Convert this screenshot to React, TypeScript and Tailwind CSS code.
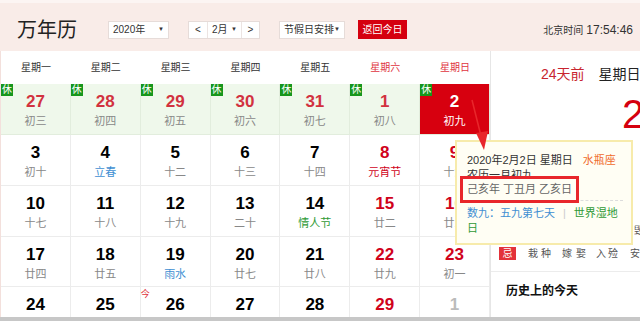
import React from "react";

type Cell = {
  d: string;
  l?: string;
  dc?: string;
  lc?: string;
  rest?: boolean;
  sel?: boolean;
  today?: boolean;
};

const weekdays = ["星期一", "星期二", "星期三", "星期四", "星期五", "星期六", "星期日"];

const RED = "text-[#d0021b]";
const HRED = "text-[#d2323f]";
const BLUE = "text-[#3f8fd2]";
const GREEN = "text-[#2f9a36]";

const rows: Cell[][] = [
  [
    { d: "27", l: "初三", dc: HRED, rest: true },
    { d: "28", l: "初四", dc: HRED, rest: true },
    { d: "29", l: "初五", dc: HRED, rest: true },
    { d: "30", l: "初六", dc: HRED, rest: true },
    { d: "31", l: "初七", dc: HRED, rest: true },
    { d: "1", l: "初八", dc: HRED, rest: true },
    { d: "2", l: "初九", rest: true, sel: true },
  ],
  [
    { d: "3", l: "初十" },
    { d: "4", l: "立春", lc: BLUE },
    { d: "5", l: "十二" },
    { d: "6", l: "十三" },
    { d: "7", l: "十四" },
    { d: "8", l: "元宵节", dc: RED, lc: RED },
    { d: "9", l: "十六", dc: RED },
  ],
  [
    { d: "10", l: "十七" },
    { d: "11", l: "十八" },
    { d: "12", l: "十九" },
    { d: "13", l: "二十" },
    { d: "14", l: "情人节", lc: GREEN },
    { d: "15", l: "廿二", dc: RED },
    { d: "16", l: "廿三", dc: RED },
  ],
  [
    { d: "17", l: "廿四" },
    { d: "18", l: "廿五" },
    { d: "19", l: "雨水", lc: BLUE },
    { d: "20", l: "廿七" },
    { d: "21", l: "廿八" },
    { d: "22", l: "廿九", dc: RED },
    { d: "23", l: "初一", dc: RED },
  ],
  // last row is cut by the window, lunar text not visible
  [
    { d: "24" },
    { d: "25" },
    { d: "26", today: true },
    { d: "27" },
    { d: "28" },
    { d: "29", dc: RED },
    { d: "1", dc: "text-[#bbbbbb]" },
  ],
];

const rowHeights = ["h-[51px]", "h-[51px]", "h-[51px]", "h-[50px]", "h-[50px]"];

function DayCell({ c, holiday }: { c: Cell; holiday: boolean }) {
  const bg = c.sel ? "bg-[#d7000f]" : holiday ? "bg-[#eff8eb]" : "bg-white";
  const border = holiday ? "border-[#e2eddd]" : "border-[#ececec]";
  return (
    <div className={`relative flex flex-col items-center pt-[8px] border-r border-b ${border} ${bg}`}>
      {c.rest && (
        <span className="absolute left-0 top-0 w-[12px] h-[12px] bg-[#17961c] text-white text-[10px] leading-[12px] text-center">
          休
        </span>
      )}
      {c.today && (
        <span className="absolute left-0 top-[2px] text-[9px] leading-[10px] text-[#e0313a]">今</span>
      )}
      <span
        className={`text-[17px] leading-[20px] font-bold ${c.sel ? "text-white" : c.dc ?? "text-black"}`}
      >
        {c.d}
      </span>
      {c.l && (
        <span className={`text-[11px] leading-[18px] ${c.sel ? "text-white" : c.lc ?? "text-[#888888]"}`}>
          {c.l}
        </span>
      )}
    </div>
  );
}

function Select({ label, w }: { label: string; w: string }) {
  return (
    <div className={`${w} h-[18px] bg-white border border-[#e6dcd9] flex items-center justify-between px-[4px] text-[10px] text-[#333] whitespace-nowrap`}>
      <span>{label}</span>
      <span className="text-[6px]">▼</span>
    </div>
  );
}

export default function App() {
  return (
    <div className="relative w-[640px] h-[321px] overflow-hidden bg-white font-['Liberation_Sans','Noto_Sans_CJK_SC',sans-serif] border-t-[3px] border-[#fcf5f3]">
      {/* header */}
      <div className="h-[48px] bg-[#f9ece8] flex items-center pl-[17px] pr-[7px] pt-[5px]">
        <h1 className="text-[20px] leading-[24px] text-[#222] w-[91px]">万年历</h1>
        <Select label="2020年" w="w-[61px]" />
        <div className="ml-[19px] w-[72px] h-[18px] bg-white border border-[#e6dcd9] flex items-center text-[10px] text-[#333]">
          <span className="w-[18px] text-center">&lt;</span>
          <div className="w-[35px] h-full border-x border-[#ece4e2] flex items-center justify-between px-[4px]">
            <span>2月</span>
            <span className="text-[6px]">▼</span>
          </div>
          <span className="flex-1 text-center">&gt;</span>
        </div>
        <div className="ml-[19px]">
          <Select label="节假日安排" w="w-[66px]" />
        </div>
        <button className="ml-[13px] w-[49px] h-[19px] bg-[#d5000f] text-white text-[10px] leading-[19px]">
          返回今日
        </button>
        <div className="ml-auto flex items-baseline gap-[3px] text-[#333]">
          <span className="text-[10px]">北京时间</span>
          <span className="text-[12px]">17:54:46</span>
        </div>
      </div>

      {/* body */}
      <div className="flex h-[266px] overflow-hidden border-l border-[#f3e0dc]">
        <div className="w-[489px] shrink-0">
          <div className="h-[33px] grid grid-cols-7 items-center text-center text-[10px]">
            {weekdays.map((w, i) => (
              <span key={w} className={i >= 5 ? "text-[#e0353f]" : "text-[#333]"}>
                {w}
              </span>
            ))}
          </div>
          {rows.map((r, ri) => (
            <div key={ri} className={`grid grid-cols-7 ${rowHeights[ri]}`}>
              {r.map((c, ci) => (
                <DayCell key={ci} c={c} holiday={ri === 0} />
              ))}
            </div>
          ))}
        </div>

        {/* right panel */}
        <div className="flex-1 border-l border-[#e6e6e6] flex flex-col overflow-hidden">
          <div className="mt-[15px] h-[16px] flex items-center pl-[50px] gap-[14px] whitespace-nowrap">
            <span className="text-[14px] text-[#c8242e]">24天前</span>
            <span className="text-[14px] text-[#222]">星期日</span>
          </div>
          <div className="mt-[12px] h-[40px] pl-[131px] text-[40px] leading-[40px] text-[#d5000f] whitespace-nowrap">
            2
          </div>
          <div className="h-[90px]" />
          <div className="h-[14px] pl-[143px] text-[10px] leading-[14px] text-[#555] whitespace-nowrap">毁</div>
          <div className="mt-[9px] h-[13px] flex items-center pl-[8px] whitespace-nowrap text-[10px] text-[#555]">
            <span className="w-[18px] h-[13px] bg-[#e3323a] text-white leading-[13px] text-center">忌</span>
            <span className="ml-[12px] tracking-[3px]">栽种</span>
            <span className="ml-[8px] tracking-[4px]">嫁娶</span>
            <span className="ml-[6px] tracking-[2px]">入殓</span>
            <span className="ml-[10px]">安</span>
          </div>
          <div className="h-[12px] border-b border-[#ececec]" />
          <div className="pt-[11px] pl-[15px] text-[12px] leading-[16px] font-bold text-[#111]">历史上的今天</div>
        </div>
      </div>

      <div className="h-[4px] bg-[#c7c7c7]" />

      {/* tooltip */}
      <div className="absolute left-[455px] top-[137px] w-[178px] h-[105px] bg-[#fffef4] border-2 border-[#f7ebab] pl-[10px] pt-[10px] text-[11px] text-[#333] whitespace-nowrap">
        <div className="leading-[16px]">
          2020年2月2日 星期日<span className="ml-[10px] text-[#f06b2b]">水瓶座</span>
        </div>
        <div className="leading-[15px]">农历一月初九</div>
        <div className="relative -mt-[4px] h-[22px] leading-[21px] bg-[#fffef4] text-[#666] border-b border-dashed border-[#dcdcdc] mr-[8px]">
          己亥年 丁丑月 乙亥日
        </div>
        <div className="leading-[15px] mt-[5px]">
          <span className={BLUE}>数九：五九第七天</span>
          <span className="mx-[8px] text-[#cccccc]">|</span>
          <span className={GREEN}>世界湿地</span>
          <br />
          <span className={GREEN}>日</span>
        </div>
      </div>
      {/* red annotation box */}
      <div className="absolute left-[460px] top-[173px] w-[119px] h-[27px] border-[3px] border-[#e8262b]" />

      {/* red annotation arrow */}
      <svg className="absolute left-0 top-0" width="640" height="321" viewBox="0 0 640 321">
        <line x1="472" y1="97" x2="481" y2="133" stroke="#e8262b" strokeWidth="1.6" />
        <polygon points="476,130 488,128 484,147" fill="#e8262b" />
      </svg>
    </div>
  );
}
